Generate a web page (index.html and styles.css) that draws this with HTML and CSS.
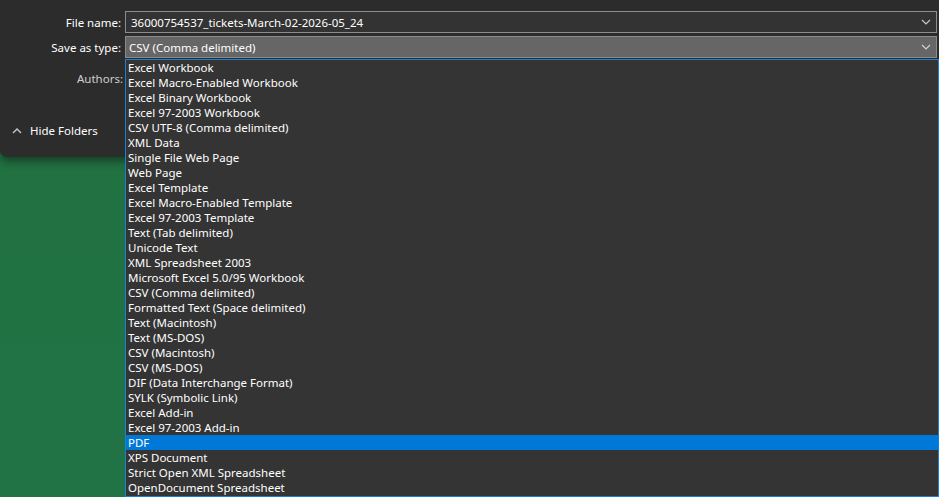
FILE: index.html
```html
<!DOCTYPE html>
<html lang="en">
<head>
<meta charset="utf-8">
<title>Save As</title>
<link rel="stylesheet" href="styles.css">
</head>
<body>
<div class="dialog">
  <div class="form">
    <div class="label">File name:</div>
    <div class="field input">
      <span class="value">36000754537_tickets-March-02-2026-05_24</span>
      <svg class="chev" width="10" height="6" viewBox="0 0 10 6"><path d="M1 1 L5 5 L9 1" fill="none" stroke="#c8c8c8" stroke-width="1.2"/></svg>
    </div>
    <div class="label">Save as type:</div>
    <div class="field select">
      <span class="value">CSV (Comma delimited)</span>
      <svg class="chev" width="10" height="6" viewBox="0 0 10 6"><path d="M1 1 L5 5 L9 1" fill="none" stroke="#d0d0d0" stroke-width="1.2"/></svg>
    </div>
    <div class="label dim authors">Authors:</div>
    <div class="field empty"></div>
  </div>
  <div class="hide">
    <svg width="10" height="6" viewBox="0 0 10 6"><path d="M1 5 L5 1 L9 5" fill="none" stroke="#c8c8c8" stroke-width="1.4"/></svg>
    <span>Hide Folders</span>
  </div>
</div>
<ul class="listbox">
  <li>Excel Workbook</li>
  <li>Excel Macro-Enabled Workbook</li>
  <li>Excel Binary Workbook</li>
  <li>Excel 97-2003 Workbook</li>
  <li>CSV UTF-8 (Comma delimited)</li>
  <li>XML Data</li>
  <li>Single File Web Page</li>
  <li>Web Page</li>
  <li>Excel Template</li>
  <li>Excel Macro-Enabled Template</li>
  <li>Excel 97-2003 Template</li>
  <li>Text (Tab delimited)</li>
  <li>Unicode Text</li>
  <li>XML Spreadsheet 2003</li>
  <li>Microsoft Excel 5.0/95 Workbook</li>
  <li>CSV (Comma delimited)</li>
  <li>Formatted Text (Space delimited)</li>
  <li>Text (Macintosh)</li>
  <li>Text (MS-DOS)</li>
  <li>CSV (Macintosh)</li>
  <li>CSV (MS-DOS)</li>
  <li>DIF (Data Interchange Format)</li>
  <li>SYLK (Symbolic Link)</li>
  <li>Excel Add-in</li>
  <li>Excel 97-2003 Add-in</li>
  <li class="selected">PDF</li>
  <li>XPS Document</li>
  <li>Strict Open XML Spreadsheet</li>
  <li>OpenDocument Spreadsheet</li>
</ul>
</body>
</html>
```
FILE: styles.css
```css
* { box-sizing: border-box; }
html, body {
  margin: 0;
  padding: 0;
  width: 939px;
  height: 497px;
  overflow: hidden;
}
body {
  background: linear-gradient(180deg, #1a5c37 0px, #21703f 30px, #217346 100%);
  font-family: "Segoe UI", "Noto Sans", "Open Sans", sans-serif;
  font-size: 11.5px;
  color: #ffffff;
  position: relative;
}
.dialog {
  height: 157px;
  background: #2c2c2c;
  border-bottom-left-radius: 7px;
  box-shadow: 0 4px 10px rgba(0, 0, 0, 0.45);
  padding-top: 11px;
}
.form {
  display: grid;
  grid-template-columns: 125px 812px;
  grid-auto-rows: 22px;
  row-gap: 3px;
}
.label {
  text-align: right;
  padding-right: 4px;
  padding-top: 1px;
  line-height: 22px;
  color: #ffffff;
}
.label.dim { color: #cfcfcf; }
.label.authors { padding-right: 2px; margin-top: 6px; }
.field {
  display: flex;
  align-items: center;
  justify-content: space-between;
  border: 1px solid #8c8c8c;
  padding: 1px 5px 0 5px;
  line-height: 19px;
}
.input { background: #333333; }
.select { background: #666666; border-color: #8a8a8a; padding-left: 3px; }
.field.empty { border: none; }
.chev { flex: none; margin-top: -1px; }
.hide {
  display: flex;
  align-items: center;
  gap: 8px;
  margin-top: 40px;
  padding-left: 12px;
  color: #ffffff;
  line-height: 16px;
}
.listbox {
  position: absolute;
  left: 125px;
  top: 59px;
  width: 814px;
  height: 438px;
  margin: 0;
  padding: 0;
  list-style: none;
  background: #343434;
  border: 1px solid #1a7fd6;
  box-shadow: 0 1px 0 #8c8c8c;
}
.listbox li {
  height: 15px;
  line-height: 15px;
  padding-left: 2px;
  white-space: nowrap;
  color: #ffffff;
}
.listbox li.selected {
  background: #0078d7;
}
```
